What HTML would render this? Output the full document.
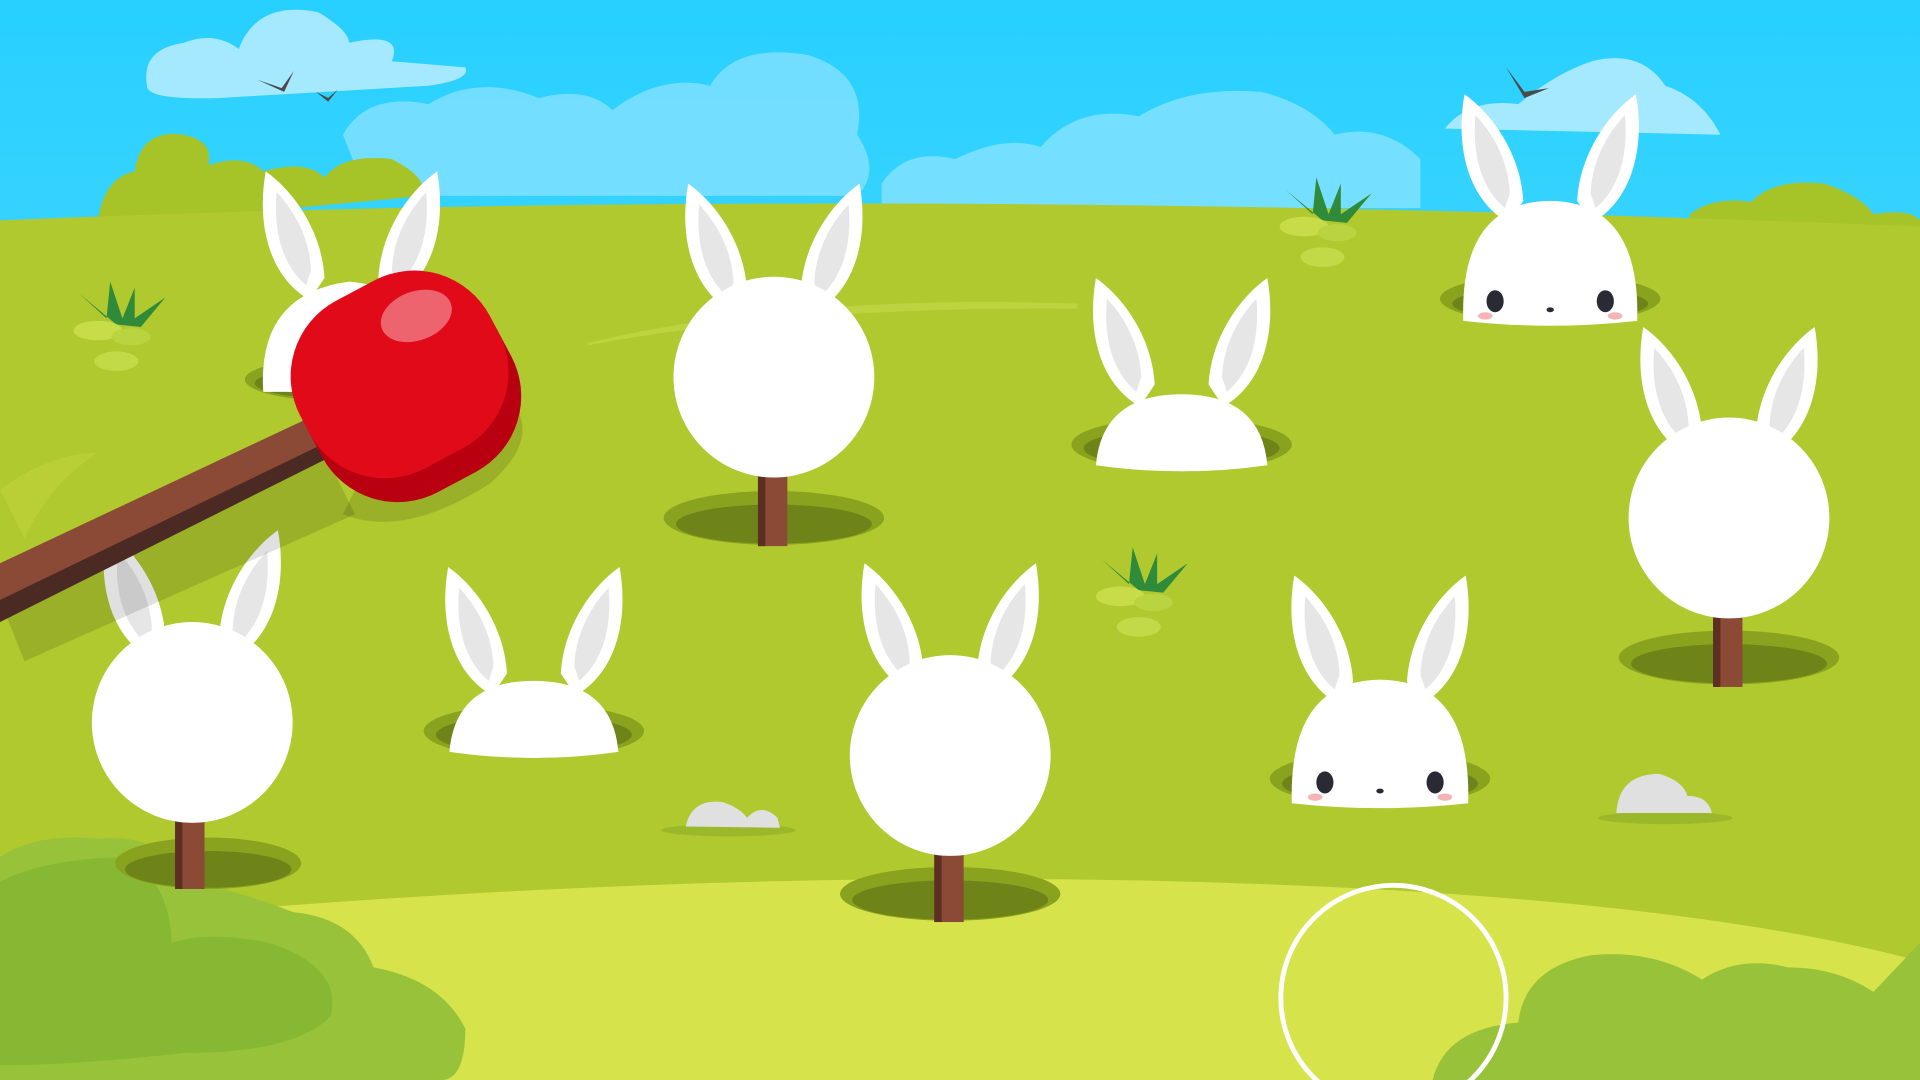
<!DOCTYPE html>
<html><head><meta charset="utf-8"><style>html,body{margin:0;padding:0;overflow:hidden;width:1920px;height:1080px}svg{display:block}</style></head>
<body>
<svg width="1920" height="1080" viewBox="0 0 1568 882" preserveAspectRatio="none" xmlns="http://www.w3.org/2000/svg">
<defs>
<linearGradient id="sky" x1="0" y1="0" x2="0" y2="1"><stop offset="0" stop-color="#27d0ff"/><stop offset="1" stop-color="#6fdcff"/></linearGradient>
<g id="ear">
 <path d="M14 50 C -18 32 -30 -10 -22 -55 C 2 -38 24 -5 26 32 Z" fill="#fff"/>
 <path d="M11 38 C -8 22 -16 -5 -13 -38 C 2 -22 14 0 15 26 Z" fill="#e6e6e6"/>
</g>
<g id="ears">
 <use href="#ear" transform="translate(-48,0)"/>
 <use href="#ear" transform="translate(48,0) scale(-1,1)"/>
</g>
<g id="tuft">
 <path d="M0 0 L-30 -25 L-8 -5 L-5 -35 L5 -5 L15 -30 L15 -5 L40 -22 L20 2 Z" fill="#2f8a3a"/>
 <ellipse cx="-15" cy="5" rx="20" ry="8" fill="#c8dc4a"/><ellipse cx="12" cy="10" rx="16" ry="7" fill="#b9d440"/><ellipse cx="0" cy="30" rx="18" ry="8" fill="#c2da48"/>
</g>
</defs>
<rect width="1568" height="882" fill="url(#sky)"/>
<g>
<path d="M120 70 Q115 40 150 35 Q175 25 195 40 Q210 0 260 10 Q285 25 285 35 Q330 25 320 50 L380 55 Q385 65 350 70 L180 80 Q120 82 120 70Z" fill="#a4e9ff"/>
<path d="M280 110 Q300 75 350 85 Q390 60 440 80 Q480 70 500 90 Q540 60 580 70 Q600 35 660 45 Q710 60 700 110 Q720 140 700 160 L300 160 Z" fill="#7fe1ff" opacity=".85"/>
<path d="M720 150 Q740 120 780 130 Q820 110 850 120 Q880 85 930 95 Q970 70 1030 75 Q1070 85 1090 110 Q1130 100 1160 130 L1160 170 L720 170Z" fill="#80e2ff" opacity=".85"/>
<path d="M1180 105 Q1200 80 1240 85 Q1270 60 1300 50 Q1340 40 1360 70 Q1390 80 1405 110 Z" fill="#a4e9ff"/>
</g>
<path d="M210 65 L230 72 L240 58 L232 75 Z M258 75 L268 80 L276 73 L268 83Z M1230 55 L1245 75 L1265 72 L1245 80Z" fill="#4a4a4a"/>
<g fill="#a6c428">
<path d="M80 180 Q85 145 110 140 Q115 105 150 110 Q175 115 170 135 Q200 125 215 140 Q250 130 265 145 Q280 125 320 130 Q350 145 345 160 L80 185Z"/>
<path d="M1380 175 Q1400 160 1430 165 Q1450 145 1490 150 Q1520 160 1530 175 Q1560 170 1568 180 L1568 200 L1380 190Z"/>
</g>
<path d="M0 180 Q700 150 1568 185 L1568 882 L0 882Z" fill="#afc92e"/>
<path d="M480 280 Q650 240 880 248 L880 252 Q650 250 480 282Z" fill="#c3d848" opacity=".7"/>
<path d="M0 760 Q600 700 1100 725 Q1400 740 1568 785 L1568 882 L0 882Z" fill="#d6e34a"/>
<path d="M0 700 Q30 680 80 685 Q130 680 160 720 Q200 730 240 745 Q290 750 305 790 Q360 800 380 840 Q380 882 360 882 L0 882Z" fill="#97c23a"/>
<path d="M0 720 Q40 700 110 700 Q140 730 140 770 Q170 760 220 770 Q280 790 270 830 Q240 860 150 860 Q60 870 0 870Z" fill="#86b834"/>
<path d="M1170 882 Q1180 840 1240 835 Q1245 790 1300 780 Q1350 775 1390 800 Q1420 780 1460 790 Q1500 790 1530 810 L1568 770 L1568 882Z" fill="#97c23a"/>
<use href="#tuft" transform="translate(95,265)"/>
<use href="#tuft" transform="translate(1080,180)"/>
<use href="#tuft" transform="translate(930,482)"/>
<ellipse cx="595" cy="678" rx="55" ry="5" fill="#9bb82a"/>
<path d="M560 675 Q565 652 590 655 Q605 660 610 668 Q622 655 635 668 L637 676 Z" fill="#e0e0e0"/>
<ellipse cx="1360" cy="668" rx="55" ry="5" fill="#9bb82a"/>
<path d="M1320 664 Q1322 632 1355 632 Q1375 638 1378 650 Q1395 650 1398 664 Z" fill="#e0e0e0"/>
<g>
<ellipse cx="280" cy="310" rx="80" ry="18" fill="#8aa31f"/><ellipse cx="280" cy="313" rx="72" ry="13" fill="#6e8418"/>
<use href="#ears" transform="translate(287,195)"/>
<path d="M215 320 Q210 240 285 230 Q355 235 350 320Z" fill="#fff"/>
<ellipse cx="632" cy="423" rx="90" ry="22" fill="#8aa31f"/><ellipse cx="632" cy="428" rx="80" ry="16" fill="#6e8418"/>
<rect x="619" y="380" width="24" height="66" fill="#8b4a36"/><rect x="619" y="380" width="6" height="66" fill="#5c2f22"/>
<use href="#ears" transform="translate(632,205)"/>
<circle cx="632" cy="308" r="82" fill="#fff"/>
<ellipse cx="170" cy="705" rx="76" ry="21" fill="#8aa31f"/><ellipse cx="170" cy="710" rx="68" ry="15" fill="#6e8418"/>
<rect x="143" y="660" width="24" height="66" fill="#8b4a36"/><rect x="143" y="660" width="6" height="66" fill="#5c2f22"/>
<use href="#ears" transform="translate(157,488)"/>
<circle cx="157" cy="590" r="82" fill="#fff"/>
<ellipse cx="776" cy="730" rx="90" ry="22" fill="#8aa31f"/><ellipse cx="776" cy="735" rx="80" ry="16" fill="#6e8418"/>
<rect x="763" y="690" width="24" height="63" fill="#8b4a36"/><rect x="763" y="690" width="6" height="63" fill="#5c2f22"/>
<use href="#ears" transform="translate(776,515)"/>
<circle cx="776" cy="617" r="82" fill="#fff"/>
<ellipse cx="1412" cy="537" rx="90" ry="22" fill="#8aa31f"/><ellipse cx="1412" cy="542" rx="80" ry="16" fill="#6e8418"/>
<rect x="1399" y="495" width="24" height="66" fill="#8b4a36"/><rect x="1399" y="495" width="6" height="66" fill="#5c2f22"/>
<use href="#ears" transform="translate(1412,322)"/>
<circle cx="1412" cy="423" r="82" fill="#fff"/>
<ellipse cx="965" cy="363" rx="90" ry="22" fill="#8aa31f"/><ellipse cx="965" cy="366" rx="80" ry="16" fill="#6e8418"/>
<use href="#ears" transform="translate(965,282)"/>
<path d="M895 380 Q900 322 965 322 Q1030 322 1035 380 Q965 390 895 380Z" fill="#fff"/>
<ellipse cx="436" cy="597" rx="90" ry="22" fill="#8aa31f"/><ellipse cx="436" cy="600" rx="80" ry="16" fill="#6e8418"/>
<use href="#ears" transform="translate(436,518)"/>
<path d="M367 614 Q372 556 436 556 Q500 556 505 614 Q436 624 367 614Z" fill="#fff"/>
<ellipse cx="1127" cy="636" rx="90" ry="22" fill="#8aa31f"/><ellipse cx="1127" cy="640" rx="80" ry="16" fill="#6e8418"/>
<use href="#ears" transform="translate(1127,525)"/>
<path d="M1055 656 Q1052 556 1127 555 Q1202 556 1199 656 Q1127 664 1055 656Z" fill="#fff"/>
<ellipse cx="1082" cy="639" rx="7" ry="9" fill="#2a2a35"/><ellipse cx="1172" cy="639" rx="7" ry="9" fill="#2a2a35"/>
<ellipse cx="1074" cy="651" rx="6" ry="3" fill="#f6b5b5"/><ellipse cx="1180" cy="651" rx="6" ry="3" fill="#f6b5b5"/>
<ellipse cx="1127" cy="646" rx="3" ry="2" fill="#2a2a35"/>
<ellipse cx="1266" cy="244" rx="90" ry="20" fill="#8aa31f"/><ellipse cx="1266" cy="248" rx="80" ry="14" fill="#6e8418"/>
<use href="#ears" transform="translate(1266,132)"/>
<path d="M1195 262 Q1192 165 1266 164 Q1340 165 1337 262 Q1266 270 1195 262Z" fill="#fff"/>
<ellipse cx="1221" cy="246" rx="7" ry="9" fill="#2a2a35"/><ellipse cx="1311" cy="246" rx="7" ry="9" fill="#2a2a35"/>
<ellipse cx="1213" cy="258" rx="6" ry="3" fill="#f6b5b5"/><ellipse cx="1319" cy="258" rx="6" ry="3" fill="#f6b5b5"/>
<ellipse cx="1266" cy="253" rx="3" ry="2" fill="#2a2a35"/>
</g>
<path d="M0 400 Q40 370 80 370 Q40 395 20 440 Z" fill="#c0d43a" opacity=".6"/>
<path d="M0 490 L260 360 L290 420 L20 540 Z" fill="#000" opacity=".12"/>
<path d="M0 460 L255 340 L272 372 L0 508 Z" fill="#8b4a36"/>
<path d="M0 490 L265 362 L272 372 L0 508 Z" fill="#4a2a22"/>
<path d="M280 420 Q330 440 400 395 Q440 360 420 330 L300 380Z" fill="#000" opacity=".12"/>
<g transform="rotate(-28 330 318)">
<rect x="245" y="240" width="175" height="165" rx="70" fill="#b80010"/>
<rect x="245" y="228" width="175" height="155" rx="70" fill="#e10a18"/>
</g>
<ellipse cx="340" cy="258" rx="30" ry="20" transform="rotate(-20 340 258)" fill="#f07a85" opacity=".8"/>
<circle cx="1138" cy="815" r="92" fill="none" stroke="#fff" stroke-width="4"/>
</svg>
</body></html>
